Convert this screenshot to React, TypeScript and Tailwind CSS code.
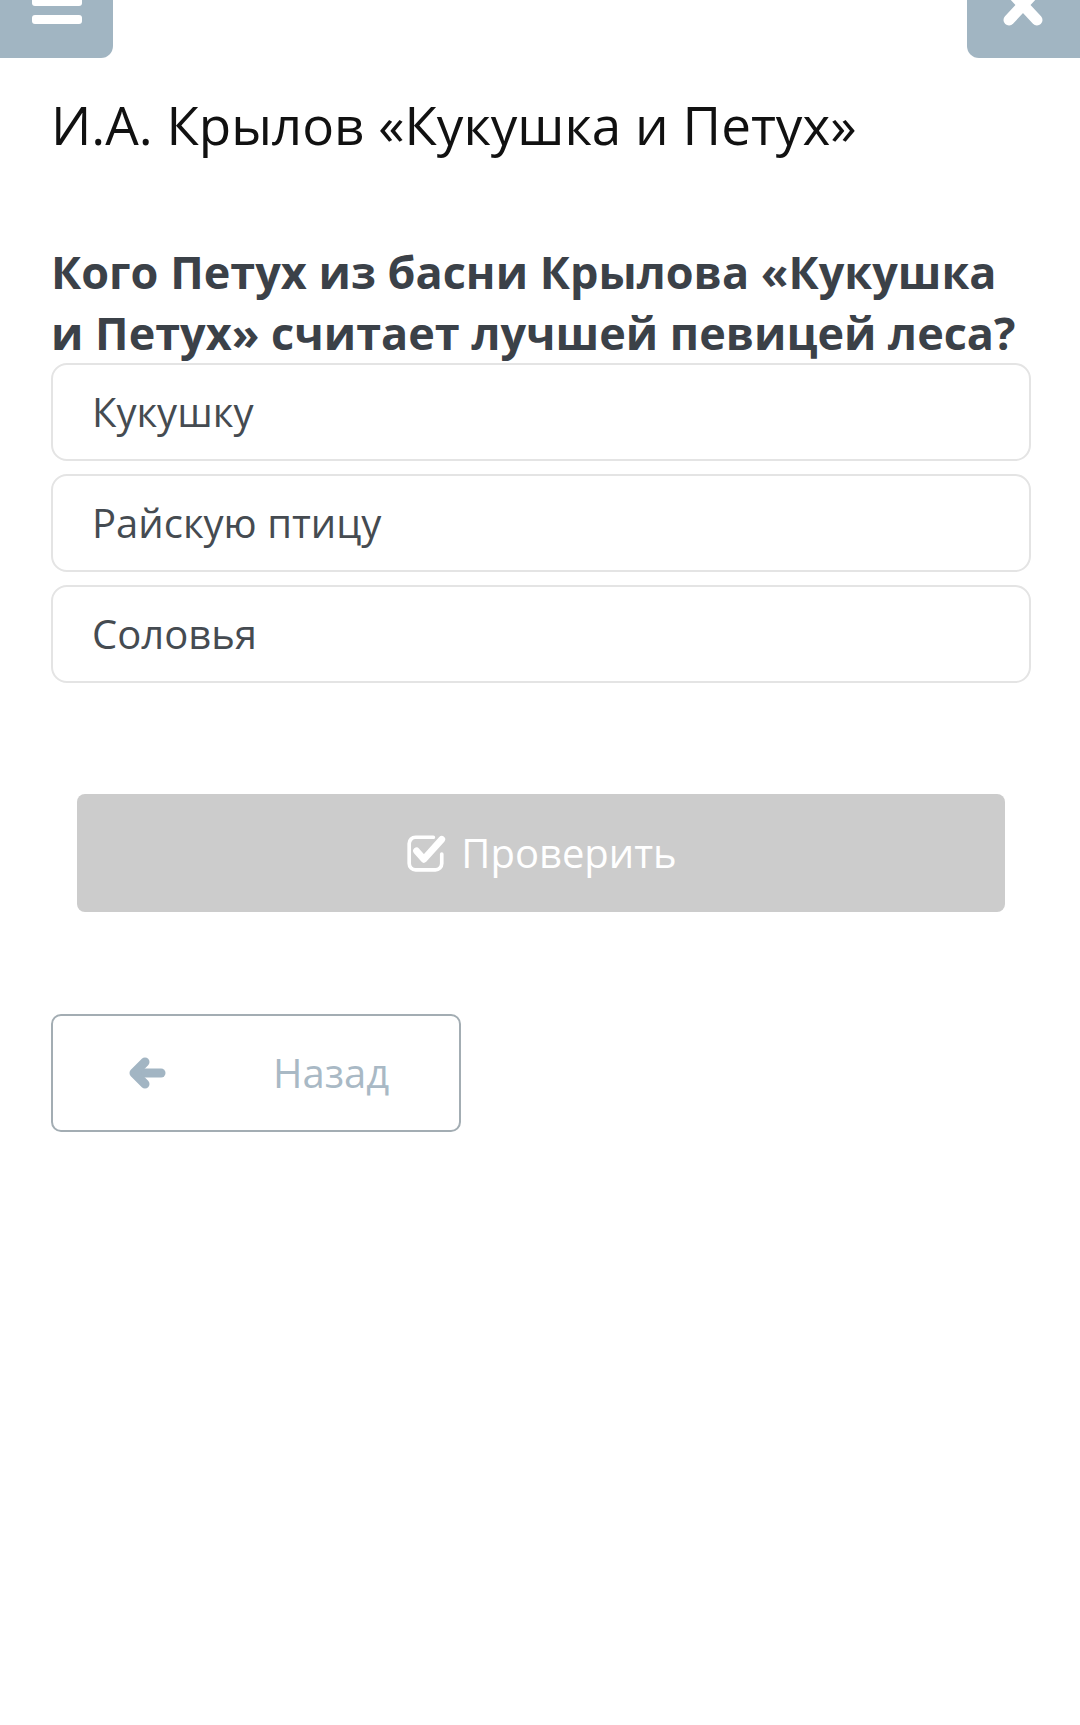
import React from "react";

const options = ["Кукушку", "Райскую птицу", "Соловья"];

function CheckSquareIcon() {
    return (
        <svg width="42" height="42" viewBox="0 0 40 40" fill="none" stroke="white" strokeLinecap="round" strokeLinejoin="round">
            <path d="M27 5 H10 a6 6 0 0 0 -6 6 v19 a6 6 0 0 0 6 6 h19 a6 6 0 0 0 6 -6 v-9" strokeWidth="3.5" />
            <path d="M11 18 L18 26 L35 7" strokeWidth="6.5" />
        </svg>
    );
}

function ArrowLeftIcon() {
    return (
        <svg width="40" height="32" viewBox="0 0 40 32" fill="none" stroke="#a2b5c3" strokeLinecap="round" strokeLinejoin="round" strokeWidth="9">
            <path d="M34 16 H8" />
            <path d="M18 5 L7 16 L18 27" />
        </svg>
    );
}

export default function App() {
    return (
        <div className="min-h-[1725px] w-[1080px] bg-white font-['Open_Sans',sans-serif]">
            <div className="flex justify-between h-[58px]">
                <div className="w-[113px] h-[58px] bg-[#a1b5c2] rounded-br-[12px] relative overflow-hidden">
                    <div className="absolute left-[32px] top-[-3px] w-[50px] h-[9px] rounded-[3px] bg-white" />
                    <div className="absolute left-[32px] top-[15px] w-[50px] h-[9px] rounded-[3px] bg-white" />
                </div>
                <div className="w-[113px] h-[58px] bg-[#a1b5c2] rounded-bl-[12px] relative overflow-hidden">
                    <svg className="absolute left-[34px] top-0" width="44" height="28" viewBox="0 0 44 28" fill="none" stroke="white" strokeWidth="11" strokeLinecap="round">
                        <path d="M8 -10 L36 20" />
                        <path d="M36 -10 L8 20" />
                    </svg>
                </div>
            </div>

            <main className="flex flex-col pl-[51px] pr-[49px]">
                <h1 className="mt-[37px] text-[53px] leading-[60px] text-[#111111] font-normal whitespace-nowrap">
                    И.А. Крылов «Кукушка и Петух»
                </h1>

                <h2 className="mt-[86px] text-[45px] leading-[61px] font-bold text-[#3b4148] whitespace-nowrap">
                    Кого Петух из басни Крылова «Кукушка
                    <br />
                    и Петух» считает лучшей певицей леса?
                </h2>

                <div className="flex flex-col gap-[13px]">
                    {options.map(o => (
                        <div key={o} className="h-[98px] flex items-center pl-[39px] border-2 border-[#e4e4e4] rounded-[16px] text-[40px] text-[#454b51]">
                            {o}
                        </div>
                    ))}
                </div>

                <button className="mt-[111px] mx-[26px] h-[118px] rounded-[8px] bg-[#cccccc] flex items-center justify-center gap-[14px] text-white text-[40px]">
                    <CheckSquareIcon />
                    <span>Проверить</span>
                </button>

                <button className="mt-[102px] w-[410px] h-[118px] border-2 border-[#a3adb3] rounded-[10px] flex items-center pl-[74px]">
                    <ArrowLeftIcon />
                    <span className="ml-[106px] text-[40px] text-[#a9b9c5]">Назад</span>
                </button>
            </main>
        </div>
    );
}
